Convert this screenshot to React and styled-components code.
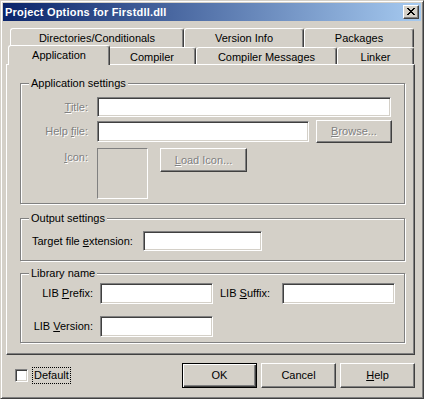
import React from 'react';
import styled, { createGlobalStyle, css } from 'styled-components';

const FACE = '#D4D0C8';

const GlobalStyle = createGlobalStyle`
  html, body { margin: 0; padding: 0; background: ${FACE}; }
  body { font-family: "Liberation Sans", Arial, sans-serif; font-size: 11px; }
  * { box-sizing: border-box; }
`;

const Window = styled.div`
  width: 424px;
  height: 399px;
  background: ${FACE};
  border: 1px solid;
  border-color: ${FACE} #404040 #404040 ${FACE};
  box-shadow: inset 1px 1px 0 #fff, inset -1px -1px 0 #808080;
  padding: 2px;
  display: flex;
  flex-direction: column;
  font-family: "Liberation Sans", Arial, sans-serif;
  font-size: 11px;
  color: #000;
`;

const TitleBar = styled.div`
  height: 18px;
  flex: none;
  display: flex;
  align-items: center;
  padding-left: 2px;
  background: linear-gradient(to right, #0A246A, #A6CAF0);
`;

const TitleText = styled.span`
  color: #fff;
  font-weight: bold;
  font-size: 11px;
  line-height: 13px;
  letter-spacing: 0.2px;
`;

const CloseButton = styled.div`
  width: 16px;
  height: 14px;
  margin-left: auto;
  margin-right: 2px;
  background: ${FACE};
  border: 1px solid;
  border-color: #fff #404040 #404040 #fff;
  box-shadow: inset -1px -1px 0 #808080;
  display: flex;
  align-items: center;
  justify-content: center;
  padding: 0 1px 1px 0;
`;

const Body = styled.div`
  flex: 1;
  display: flex;
  flex-direction: column;
  padding: 7px 0 0 3px;
`;

const TabRow = styled.div`
  display: flex;
  height: ${p => p.$h}px;
  margin-left: 4px;
  width: 404px;
`;

const Tab = styled.div`
  flex: none;
  width: ${p => p.$w}px;
  height: ${p => p.$h}px;
  background: ${FACE};
  border-top: 1px solid #fff;
  border-left: 1px solid #fff;
  border-right: 1px solid #404040;
  border-radius: 3px 3px 0 0;
  box-shadow: inset -1px 0 0 #808080;
  display: flex;
  justify-content: center;
  padding-top: 2px;
  line-height: 14px;
  white-space: nowrap;
  ${p => p.$selected && css`
    position: relative;
    z-index: 2;
    width: ${p.$w + 4}px;
    height: ${p.$h + 3}px;
    margin: -2px -2px 0 -2px;
  `}
`;

const Page = styled.div`
  width: 409px;
  height: 291px;
  flex: none;
  border: 1px solid;
  border-color: #fff #404040 #404040 #fff;
  box-shadow: inset -1px -1px 0 #808080;
  padding: 12px 9px 0 13px;
  display: flex;
  flex-direction: column;
`;

const Group = styled.fieldset`
  margin: ${p => p.$mt || 0}px 0 0 0;
  padding: 0;
  height: ${p => p.$h}px;
  border: 1px solid #808080;
  box-shadow: inset 1px 1px 0 #fff, 1px 1px 0 #fff;
  min-inline-size: 0;
`;

const Legend = styled.legend`
  margin-left: 8px;
  padding: 0 2px;
  line-height: 13px;
  font-size: 11px;
  background: ${FACE};
`;

const Row = styled.div`
  display: flex;
  align-items: ${p => p.$align || 'center'};
  height: ${p => p.$h}px;
  margin-top: ${p => p.$mt}px;
  padding-left: ${p => p.$pl || 0}px;
  gap: ${p => p.$gap || 0}px;
`;

const disabledText = css`
  color: #808080;
  text-shadow: 1px 1px 0 #fff;
`;

const Label = styled.label`
  flex: none;
  width: ${p => p.$w}px;
  text-align: ${p => p.$right ? 'right' : 'left'};
  line-height: 13px;
  white-space: nowrap;
  padding-top: ${p => p.$pt || 0}px;
  ${p => p.$disabled && disabledText}
`;

const Edit = styled.div`
  flex: none;
  width: ${p => p.$w}px;
  height: ${p => p.$h}px;
  background: #fff;
  border: 1px solid;
  border-color: #808080 #fff #fff #808080;
  box-shadow: inset 1px 1px 0 #404040, inset -1px -1px 0 ${FACE};
`;

const IconBox = styled.div`
  flex: none;
  width: 51px;
  height: 51px;
  border: 1px solid;
  border-color: #808080 #fff #fff #808080;
`;

const Button = styled.div`
  flex: none;
  width: ${p => p.$w}px;
  height: ${p => p.$h}px;
  margin-left: ${p => p.$ml || 0}px;
  background: ${FACE};
  border: 1px solid;
  border-color: #fff #404040 #404040 #fff;
  box-shadow: inset -1px -1px 0 #808080;
  display: flex;
  align-items: center;
  justify-content: center;
  line-height: 13px;
  white-space: nowrap;
  ${p => p.$disabled && disabledText}
  ${p => p.$default && css`
    border-color: #000;
    box-shadow: inset 1px 1px 0 #fff, inset -1px -1px 0 #404040, inset -2px -2px 0 #808080;
  `}
`;

const BottomBar = styled.div`
  height: 41px;
  display: flex;
  align-items: center;
  padding: 0 6px 0 9px;
  gap: 4px;
`;

const CheckBox = styled.div`
  width: 13px;
  height: 13px;
  margin-top: -1px;
  background: #fff;
  border: 1px solid;
  border-color: #808080 #fff #fff #808080;
  box-shadow: inset 1px 1px 0 #404040, inset -1px -1px 0 ${FACE};
`;

const CheckLabel = styled.span`
  border: 1px dotted #000;
  padding: 1px;
  line-height: 13px;
  margin-right: auto;
`;

const U = styled.u`
  text-decoration: underline;
  text-underline-offset: 1px;
`;

function CloseIcon() {
  const rows = [
    [0, 1, 6, 7],
    [1, 2, 5, 6],
    [2, 3, 4, 5],
    [3, 4],
    [2, 3, 4, 5],
    [1, 2, 5, 6],
    [0, 1, 6, 7],
  ];
  return (
    <svg width="8" height="7" viewBox="0 0 8 7" shapeRendering="crispEdges">
      {rows.map((r, y) => r.map(x => <rect key={`${x}-${y}`} x={x} y={y} width="1" height="1" fill="#000" />))}
    </svg>
  );
}

export default function App() {
  return (
    <>
      <GlobalStyle />
      <Window>
        <TitleBar>
          <TitleText>Project Options for Firstdll.dll</TitleText>
          <CloseButton><CloseIcon /></CloseButton>
        </TitleBar>
        <Body>
          <TabRow $h={19}>
            <Tab $w={174} $h={19}>Directories/Conditionals</Tab>
            <Tab $w={120} $h={19}>Version Info</Tab>
            <Tab $w={110} $h={19}>Packages</Tab>
          </TabRow>
          <TabRow $h={17}>
            <Tab $w={98} $h={17} $selected>Application</Tab>
            <Tab $w={88} $h={17}>Compiler</Tab>
            <Tab $w={141} $h={17}>Compiler Messages</Tab>
            <Tab $w={77} $h={17}>Linker</Tab>
          </TabRow>
          <Page>
            <Group $h={127}>
              <Legend>Application settings</Legend>
              <Row $mt={7} $h={20} $gap={9}>
                <Label $w={67} $right $disabled><U>T</U>itle:</Label>
                <Edit $w={294} $h={20} />
              </Row>
              <Row $mt={3} $h={23} $gap={9}>
                <Label $w={67} $right $disabled>Help <U>f</U>ile:</Label>
                <Edit $w={212} $h={21} />
                <Button $w={76} $h={23} $ml={-2} $disabled><U>B</U>rowse...</Button>
              </Row>
              <Row $mt={5} $h={51} $gap={9} $align="flex-start">
                <Label $w={67} $right $disabled $pt={3}><U>I</U>con:</Label>
                <IconBox />
                <Button $w={87} $h={24} $ml={3} $disabled><U>L</U>oad Icon...</Button>
              </Row>
            </Group>
            <Group $mt={8} $h={49}>
              <Legend>Output settings</Legend>
              <Row $mt={6} $h={20} $pl={11}>
                <Label $w={111}>Target file <U>e</U>xtension:</Label>
                <Edit $w={119} $h={20} />
              </Row>
            </Group>
            <Group $mt={6} $h={76}>
              <Legend>Library name</Legend>
              <Row $mt={3} $h={21} $gap={7}>
                <Label $w={72} $right>LIB <U>P</U>refix:</Label>
                <Edit $w={113} $h={21} />
                <Label $w={55}>LIB <U>S</U>uffix:</Label>
                <Edit $w={113} $h={21} />
              </Row>
              <Row $mt={12} $h={21} $gap={7}>
                <Label $w={72} $right>LIB <U>V</U>ersion:</Label>
                <Edit $w={113} $h={21} />
              </Row>
            </Group>
          </Page>
          <BottomBar>
            <CheckBox />
            <CheckLabel>Default</CheckLabel>
            <Button $w={75} $h={25} $default>OK</Button>
            <Button $w={75} $h={25}>Cancel</Button>
            <Button $w={75} $h={25}><U>H</U>elp</Button>
          </BottomBar>
        </Body>
      </Window>
    </>
  );
}
